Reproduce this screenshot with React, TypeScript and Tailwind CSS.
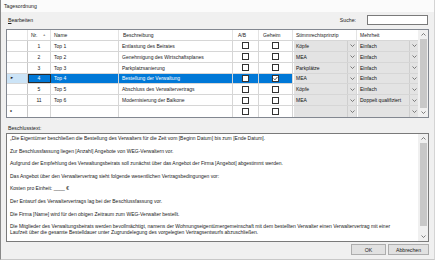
import React from "react";

type Row = { nr: string; name: string; desc: string; ab: boolean; geheim: boolean; stimm: string; mehr: string; sel?: boolean; isNew?: boolean };

const rows: Row[] = [
  { nr: "1", name: "Top 1", desc: "Entlastung des Beirates", ab: false, geheim: false, stimm: "Köpfe", mehr: "Einfach" },
  { nr: "2", name: "Top 2", desc: "Genehmigung des Wirtschaftsplanes", ab: false, geheim: false, stimm: "MEA", mehr: "Einfach" },
  { nr: "3", name: "Top 3", desc: "Parkplatzsanierung", ab: false, geheim: false, stimm: "Parkplätze", mehr: "Einfach" },
  { nr: "4", name: "Top 4", desc: "Bestellung der Verwaltung", ab: false, geheim: true, stimm: "MEA", mehr: "Einfach", sel: true },
  { nr: "5", name: "Top 5", desc: "Abschluss des Verwaltervertrags", ab: false, geheim: false, stimm: "Köpfe", mehr: "Einfach" },
  { nr: "11", name: "Top 6", desc: "Modernisierung der Balkone", ab: false, geheim: false, stimm: "MEA", mehr: "Doppelt qualifiziert" },
  { nr: "", name: "", desc: "", ab: false, geheim: false, stimm: "", mehr: "", isNew: true },
];

const Chevron = ({ up = false, color = "#606060" }: { up?: boolean; color?: string }) => (
  <svg width="5" height="3" viewBox="0 0 5 3">
    <polyline points={up ? "0.5,2.5 2.5,0.5 4.5,2.5" : "0.5,0.5 2.5,2.5 4.5,0.5"} fill="none" stroke={color} strokeWidth="0.8" />
  </svg>
);

const Check = ({ checked, sel }: { checked: boolean; sel?: boolean }) => (
  <div className={`w-[7px] h-[7px] border border-[#333] bg-white flex items-center justify-center`}>
    {checked && (
      <svg width="5" height="5" viewBox="0 0 5 5">
        <polyline points="0.6,2.4 2,3.8 4.4,1" fill="none" stroke="#222" strokeWidth="0.8" />
      </svg>
    )}
  </div>
);

const Combo = ({ text }: { text: string }) => (
  <div className="h-full flex items-stretch bg-[#e3e3e3] border-l border-white">
    <div className="flex-1 pl-[2px] flex items-center text-[#111] whitespace-nowrap overflow-hidden">{text}</div>
    <div className="w-[9px] border-l border-[#cfcfcf] flex items-center justify-center">
      <Chevron />
    </div>
  </div>
);

const cols = "grid grid-cols-[21px_23px_68px_114px_26px_34px_64px_61px]";

export default function App() {
  return (
    <div
      className="w-[435px] h-[260px] bg-[#f0f0f0] flex flex-col border-l border-[#888] border-r border-r-[#d4d4d4] border-b border-b-[#c8c8c8] text-[5px] leading-[6px] text-[#1a1a1a] overflow-hidden"
      style={{ fontFamily: '"Liberation Sans", Arial, sans-serif' }}
    >
      {/* title */}
      <div className="h-[12px] bg-[#fbfbfb] flex items-center pl-[3px] text-[5.2px]">Tagesordnung</div>
      {/* menu + search */}
      <div className="h-[16px] flex items-center pl-[7px] pr-[6px]">
        <span className="text-[5.2px]">
          <span className="underline">B</span>earbeiten
        </span>
        <div className="flex-1" />
        <span className="mr-[11px] text-[5.2px]">Suche:</span>
        <div className="w-[61px] h-[10px] bg-white border border-[#7a7a7a]" />
      </div>
      <div className="h-[1px]" />
      {/* grid */}
      <div className="mx-[5px] h-[89px] border border-[#828790] bg-white flex">
        <div className="flex-1 flex flex-col">
          <div className={`${cols} h-[11px] border-b border-[#d6d6d6]`}>
            <div className="border-r border-[#e3e3e3]" />
            <div className="border-r border-[#e3e3e3] flex items-center pl-[3px]">
              Nr.<span className="ml-[5px] text-[#999] text-[3.5px]">▲</span>
            </div>
            <div className="border-r border-[#e3e3e3] flex items-center pl-[3px]">Name</div>
            <div className="border-r border-[#e3e3e3] flex items-center pl-[4px]">Beschreibung</div>
            <div className="border-r border-[#e3e3e3] flex items-center pl-[5px]">A/B</div>
            <div className="border-r border-[#e3e3e3] flex items-center pl-[4px]">Geheim</div>
            <div className="border-r border-[#e3e3e3] flex items-center pl-[3px]">Stimmrechtsprinzip</div>
            <div className="flex items-center pl-[3px]">Mehrheit</div>
          </div>
          {rows.map((r, i) => {
            const blue = r.sel ? "bg-[#0078d7] text-white" : "";
            return (
              <div key={i} className={`${cols} h-[11px] border-b border-[#d6d6d6] last:border-b-0`}>
                <div className={`border-r border-[#c8c8c8] flex items-center pl-[3px] ${r.sel ? "bg-[#cce4f7]" : ""}`}>
                  {r.sel && <span className="text-[4px] text-[#111]">►</span>}
                  {r.isNew && <span className="text-[5px] text-[#111] font-bold">*</span>}
                </div>
                <div className={`border-r border-[#d6d6d6] flex items-center justify-center ${blue} ${r.sel ? "outline outline-1 -outline-offset-1 outline-[#2b2b2b]" : ""}`}>{r.nr}</div>
                <div className={`border-r border-[#d6d6d6] flex items-center pl-[3px] ${blue}`}>{r.name}</div>
                <div className={`border-r border-[#d6d6d6] flex items-center pl-[3px] whitespace-nowrap overflow-hidden ${blue}`}>{r.desc}</div>
                <div className={`border-r border-[#d6d6d6] flex items-center justify-center ${blue}`}>
                  <Check checked={r.ab} />
                </div>
                <div className={`border-r border-[#d6d6d6] flex items-center justify-center ${blue}`}>
                  <Check checked={r.geheim} />
                </div>
                <div className="border-r border-[#d6d6d6]">
                  <Combo text={r.stimm} />
                </div>
                <div>
                  <Combo text={r.mehr} />
                </div>
              </div>
            );
          })}
        </div>
        {/* scrollbar */}
        <div className="w-[10px] bg-[#f0f0f0] flex flex-col items-center">
          <div className="h-[9px] flex items-center justify-center"><Chevron up /></div>
          <div className="flex-1 w-[7px] bg-[#c8c8c8]" />
          <div className="h-[9px] flex items-center justify-center"><Chevron /></div>
        </div>
      </div>
      {/* Beschlusstext */}
      <div className="h-[15px] flex items-end pb-[2px] pl-[7px] text-[5.2px]">Beschlusstext:</div>
      <div className="mx-[5px] h-[109px] border border-[#7a7a7a] bg-white flex">
        <div className="flex-1 pl-[3px] pt-[1px] leading-[6.3px] whitespace-nowrap overflow-hidden">
          <div>„Die Eigentümer beschließen die Bestellung des Verwalters für die Zeit vom [Beginn Datum] bis zum [Ende Datum].</div>
          <div>&nbsp;</div>
          <div>Zur Beschlussfassung liegen [Anzahl] Angebote von WEG-Verwaltern vor.</div>
          <div>&nbsp;</div>
          <div>Aufgrund der Empfehlung des Verwaltungsbeirats soll zunächst über das Angebot der Firma [Angebot] abgestimmt werden.</div>
          <div>&nbsp;</div>
          <div>Das Angebot über den Verwaltervertrag sieht folgende wesentlichen Vertragsbedingungen vor:</div>
          <div>&nbsp;</div>
          <div>Kosten pro Einheit: ____ €</div>
          <div>&nbsp;</div>
          <div>Der Entwurf des Verwaltervertrags lag bei der Beschlussfassung vor.</div>
          <div>&nbsp;</div>
          <div>Die Firma [Name] wird für den obigen Zeitraum zum WEG-Verwalter bestellt.</div>
          <div>&nbsp;</div>
          <div>Die Mitglieder des Verwaltungsbeirats werden bevollmächtigt, namens der Wohnungseigentümergemeinschaft mit dem bestellten Verwalter einen Verwaltervertrag mit einer</div>
          <div>Laufzeit über die gesamte Bestelldauer unter Zugrundelegung des vorgelegten Vertragsentwurfs abzuschließen.</div>
        </div>
        <div className="w-[10px] bg-[#f0f0f0] flex flex-col items-center">
          <div className="h-[9px] flex items-center justify-center"><Chevron up /></div>
          <div className="flex-1 w-[7px] bg-[#c8c8c8] mb-[6px]" />
          <div className="h-[9px] flex items-center justify-center"><Chevron /></div>
        </div>
      </div>
      {/* buttons */}
      <div className="flex justify-end gap-[2px] pr-[5px] pt-[2px]">
        <div className="w-[35px] h-[11px] bg-[#e1e1e1] border border-[#adadad] flex items-center justify-center text-[5.2px]">OK</div>
        <div className="w-[41px] h-[11px] bg-[#e1e1e1] border border-[#adadad] flex items-center justify-center text-[5.2px]">Abbrechen</div>
      </div>
    </div>
  );
}
